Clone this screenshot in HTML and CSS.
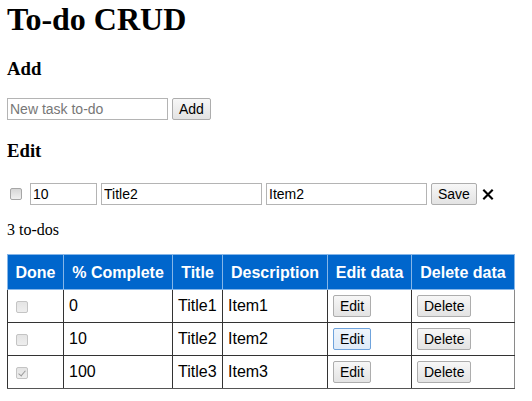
FILE: index.html
```html
<!DOCTYPE html>
<html lang="en">
<head>
<meta charset="utf-8">
<title>To-do CRUD</title>
<link rel="stylesheet" href="styles.css">
</head>
<body>
<main class="app">
  <h1 class="title">To-do CRUD</h1>

  <h3 class="section">Add</h3>
  <div class="form-row">
    <input class="field field-wide" type="text" placeholder="New task to-do">
    <button class="btn" type="button">Add</button>
  </div>

  <h3 class="section">Edit</h3>
  <div class="form-row edit-row">
    <input class="check check-edit" type="checkbox">
    <input class="field field-num" type="text" value="10">
    <input class="field field-wide" type="text" value="Title2">
    <input class="field field-wide" type="text" value="Item2">
    <button class="btn" type="button">Save</button>
    <span class="close" aria-label="Cancel">
      <svg width="12" height="11" viewBox="0 0 12 11"><path d="M1.3 0.8 L10.7 10.2 M10.7 0.8 L1.3 10.2" stroke="#000" stroke-width="2.1" fill="none"/></svg>
    </span>
  </div>

  <p class="count">3 to-dos</p>

  <table class="todos">
    <colgroup>
      <col class="c-done"><col class="c-pct"><col class="c-title"><col class="c-desc"><col class="c-edit"><col class="c-del">
    </colgroup>
    <thead>
      <tr>
        <th>Done</th><th>% Complete</th><th>Title</th><th>Description</th><th>Edit data</th><th>Delete data</th>
      </tr>
    </thead>
    <tbody>
      <tr>
        <td><input class="check" type="checkbox" disabled></td>
        <td class="txt">0</td>
        <td class="txt">Title1</td>
        <td class="txt">Item1</td>
        <td><button class="btn" type="button">Edit</button></td>
        <td><button class="btn" type="button">Delete</button></td>
      </tr>
      <tr>
        <td><input class="check" type="checkbox" disabled></td>
        <td class="txt">10</td>
        <td class="txt">Title2</td>
        <td class="txt">Item2</td>
        <td><button class="btn btn-focus" type="button">Edit</button></td>
        <td><button class="btn" type="button">Delete</button></td>
      </tr>
      <tr>
        <td><input class="check" type="checkbox" disabled checked></td>
        <td class="txt">100</td>
        <td class="txt">Title3</td>
        <td class="txt">Item3</td>
        <td><button class="btn" type="button">Edit</button></td>
        <td><button class="btn" type="button">Delete</button></td>
      </tr>
    </tbody>
  </table>
</main>
</body>
</html>
```

FILE: styles.css
```css
html, body {
  margin: 0;
  padding: 0;
  background: #fff;
  color: #000;
}

body {
  font-family: "Liberation Serif", "Times New Roman", serif;
  font-size: 16px;
}

.app {
  padding: 1px 7px 0 7px;
}

.title {
  margin: 0;
  font-size: 32px;
  line-height: 37px;
  font-weight: bold;
}

.section {
  margin: 20px 0 18px;
  font-size: 18.72px;
  line-height: 22px;
  font-weight: bold;
}

.form-row {
  display: flex;
  align-items: center;
  gap: 4px;
  height: 22px;
}

.edit-row {
  margin-top: 21px;
}

.field {
  box-sizing: border-box;
  height: 22px;
  margin: 0;
  padding: 1px 2px;
  border: 1px solid #b4b4b4;
  border-radius: 0;
  background: #fff;
  font-family: "Liberation Sans", Arial, sans-serif;
  font-size: 14px;
  color: #000;
  outline: none;
}

.field::placeholder {
  color: #777;
}

.field-wide {
  width: 161px;
}

.field-num {
  width: 67px;
}

.btn {
  display: inline-block;
  box-sizing: border-box;
  height: 22px;
  margin: 0;
  padding: 0 6px;
  border: 1px solid #adadad;
  border-radius: 2px;
  background: linear-gradient(#f7f7f7, #e3e3e3);
  font-family: "Liberation Sans", Arial, sans-serif;
  font-size: 14px;
  line-height: 20px;
  color: #000;
  vertical-align: middle;
}

.btn-focus {
  border-color: #6fa3dc;
  background: linear-gradient(#eef5fc, #dfebf8);
}

.check {
  appearance: none;
  -webkit-appearance: none;
  box-sizing: border-box;
  position: relative;
  width: 12px;
  height: 12px;
  margin: 0;
  border: 1px solid #c4c4c4;
  border-radius: 2px;
  background: linear-gradient(#e4e4e4, #eeeeee);
  vertical-align: middle;
}

.check-edit {
  margin: 0 4px 0 3px;
  border-color: #a6a6a6;
  background: linear-gradient(#d6d6d6, #f0f0f0);
}

.check:checked::after {
  content: "";
  position: absolute;
  left: 3px;
  top: 1px;
  width: 3px;
  height: 6px;
  border: solid #9a9a9a;
  border-width: 0 1.5px 1.5px 0;
  transform: rotate(40deg);
}

.close {
  display: inline-flex;
  margin-left: 1px;
  width: 12px;
  height: 11px;
}

.count {
  margin: 16px 0 15px;
  line-height: 18px;
}

.todos {
  table-layout: fixed;
  width: 507px;
  border-collapse: collapse;
  font-family: "Liberation Sans", Arial, sans-serif;
  font-size: 16px;
}

.c-done { width: 56px; }
.c-pct { width: 109px; }
.c-title { width: 50px; }
.c-desc { width: 105px; }
.c-edit { width: 84px; }
.c-del { width: 103px; }

.todos th {
  padding: 9px 0 7px;
  line-height: 18px;
  background: #0066cc;
  color: #fff;
  font-weight: bold;
  text-align: center;
  border: 1px solid #86b6e8;
  white-space: nowrap;
}

.todos td {
  box-sizing: border-box;
  padding: 0 5px;
  height: 33px;
  line-height: 18px;
  border: 1px solid #333;
  vertical-align: middle;
  white-space: nowrap;
}

.todos td:first-child {
  padding-left: 8px;
}

.todos td:last-child {
  border-right-color: #8a8a8a;
}

.todos tbody tr:last-child td {
  border-bottom-color: #555;
}
```
